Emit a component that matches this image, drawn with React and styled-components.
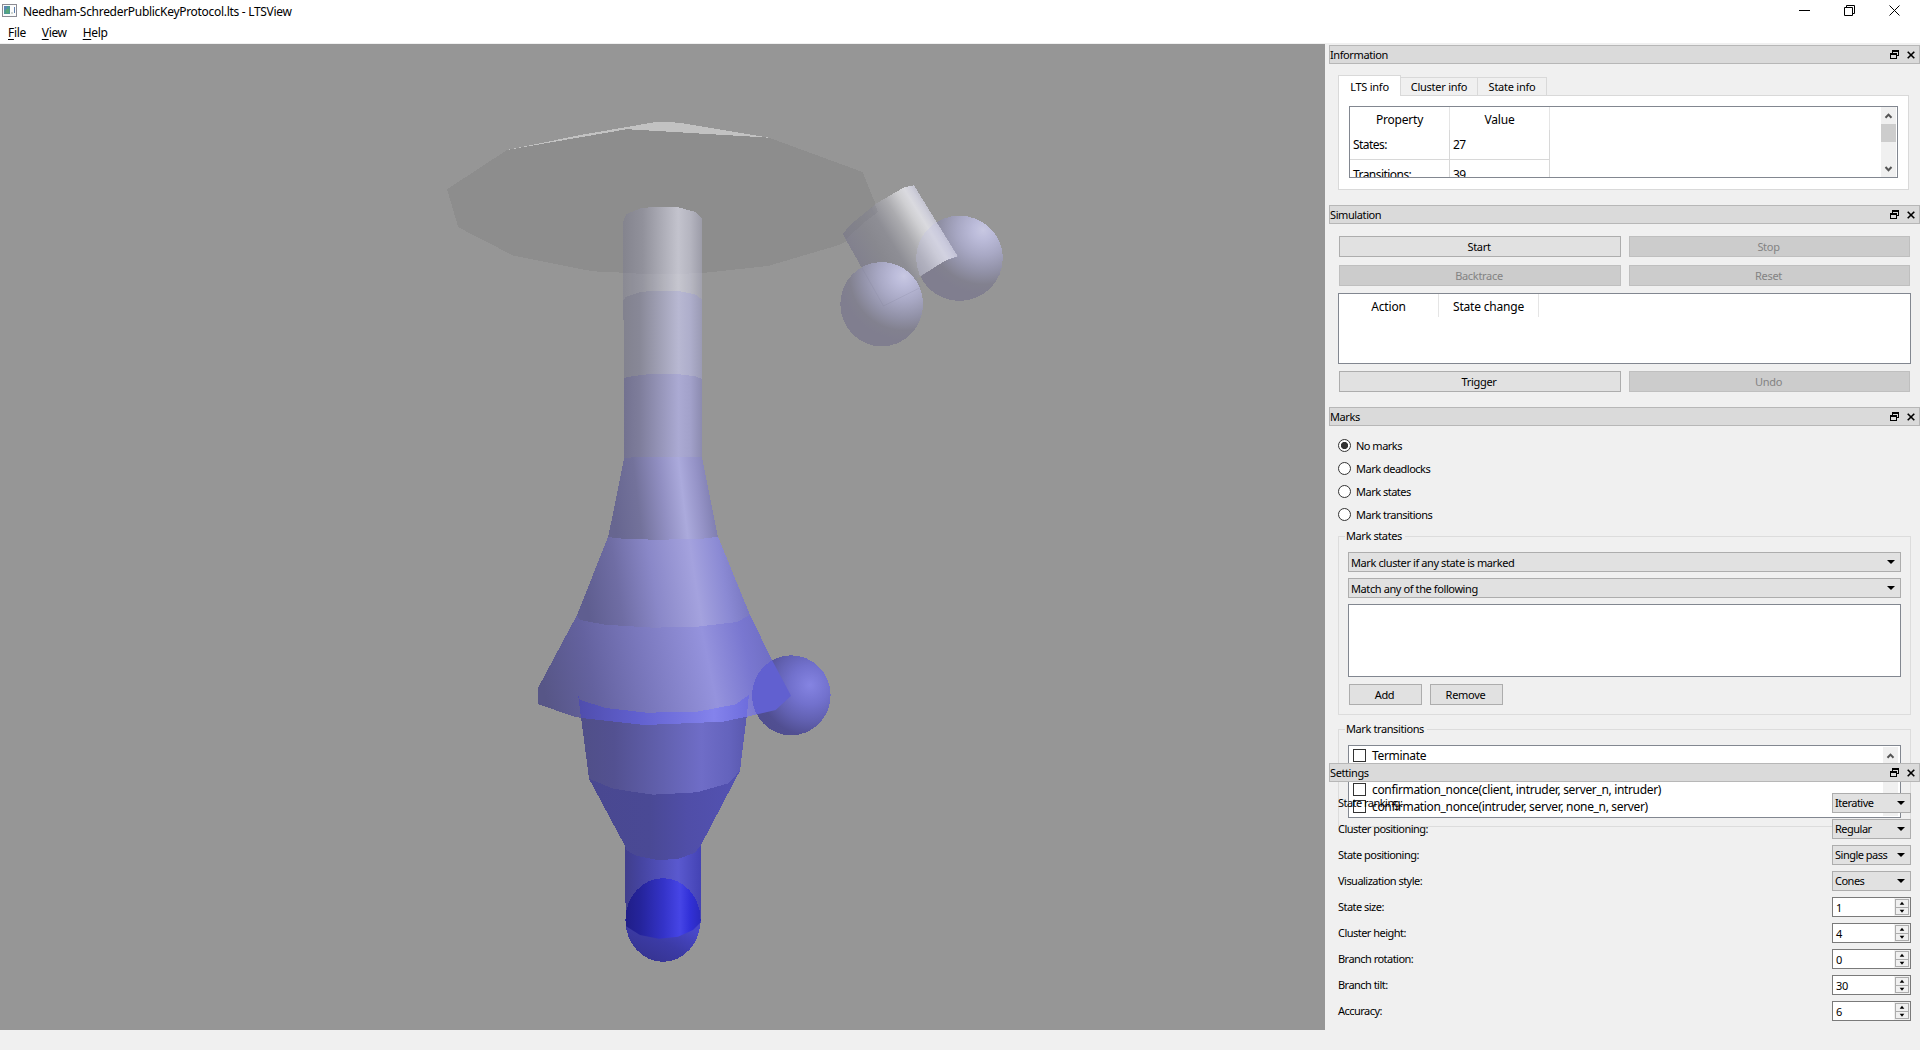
import React from "react";
import styled, { createGlobalStyle, css } from "styled-components";

const Global = createGlobalStyle`
  * { box-sizing: border-box; }
  body { margin: 0; background: #f0f0f0; overflow: hidden; }
`;

const tahoma = css`
  font-family: "Noto Sans", "Open Sans", sans-serif;
  font-size: 11px;
  letter-spacing: -0.4px;
`;
const segoe = css`
  font-family: "Noto Sans", "Open Sans", sans-serif;
  font-size: 12px;
  letter-spacing: -0.2px;
`;

const Window = styled.div`
  width: 1920px;
  height: 1050px;
  display: flex;
  flex-direction: column;
  background: #f0f0f0;
  color: #000;
  white-space: nowrap;
  ${tahoma}
`;
const TitleBar = styled.header`
  height: 22px;
  flex: none;
  display: flex;
  align-items: center;
  padding: 0 20px 0 2px;
  background: #fff;
  ${segoe}
  svg { display: block; }
`;
const Caption = styled.span`
  flex: 1;
  margin-left: 6px;
  padding-top: 1px;
  letter-spacing: -0.3px;
`;
const WindowButtons = styled.div`
  display: flex;
  gap: 34px;
  margin-top: -2px;
`;
const MenuBar = styled.nav`
  height: 21px;
  flex: none;
  display: flex;
  gap: 16px;
  padding: 2px 8px 0;
  background: #fff;
  line-height: 18px;
  ${segoe}
  letter-spacing: -0.35px;
`;
const Accel = styled.span`
  text-decoration: underline;
  text-underline-offset: 2px;
`;
const Body = styled.div`
  height: 987px;
  flex: none;
  display: flex;
`;
const Viewport = styled.main`
  width: 1325px;
  height: 986px;
  margin-top: 1px;
  flex: none;
  background: #969696;
  svg { display: block; }
`;
const DockArea = styled.aside`
  width: 591px;
  margin-left: 4px;
  display: flex;
  flex-direction: column;
  padding-top: 2px;
`;
const Dock = styled.section`
  height: ${(p) => p.$h}px;
  flex: none;
  position: relative;
  z-index: ${(p) => p.$z || 0};
`;
const DockTitle = styled.div`
  height: 19px;
  display: flex;
  align-items: center;
  gap: 8px;
  padding: 0 4px 0 0;
  border: 1px solid #b7b7b7;
  background: #dadada;
  span { flex: 1; }
  svg { display: block; }
`;
const DockBody = styled.div`
  padding: ${(p) => p.$pad};
`;

const TabRow = styled.div`
  display: flex;
  align-items: flex-end;
  height: 21px;
  margin-bottom: -1px;
  position: relative;
`;
const Tab = styled.div`
  width: ${(p) => p.$w}px;
  height: ${(p) => (p.$active ? 21 : 18)}px;
  margin-bottom: ${(p) => (p.$active ? 0 : 1)}px;
  line-height: ${(p) => (p.$active ? 21 : 18)}px;
  text-align: center;
  border: 1px solid #d9d9d9;
  border-bottom: 0;
  border-left-width: ${(p) => (p.$active ? 1 : 0)}px;
  background: ${(p) => (p.$active ? "#fff" : "#f0f0f0")};
  letter-spacing: -0.25px;
`;
const TabPane = styled.div`
  width: 571px;
  height: 95px;
  padding: 10px;
  border: 1px solid #d9d9d9;
  background: #fff;
`;
const Sunken = styled.div`
  width: ${(p) => p.$w}px;
  height: ${(p) => p.$h}px;
  border: 1px solid #828790;
  background: #fff;
  overflow: hidden;
  display: flex;
  justify-content: space-between;
  ${segoe}
`;
const Grid = styled.div`
  display: grid;
  grid-template-columns: 100px 100px;
  grid-template-rows: 23px;
  grid-auto-rows: 30px;
  height: 70px;
`;
const HeadCell = styled.div`
  border-right: 1px solid #e5e5e5;
  text-align: center;
  line-height: 25px;
`;
const Cell = styled.div`
  border-right: 1px solid #d8d8d8;
  border-bottom: 1px solid #d8d8d8;
  padding-left: 3px;
  line-height: 30px;
  letter-spacing: -0.55px;
`;
const ScrollTrack = styled.div`
  width: 15px;
  margin: ${(p) => p.$m || "0 1px 0 0"};
  background: #f0f0f0;
  display: flex;
  flex-direction: column;
  justify-content: space-between;
  svg { display: block; }
`;
const Thumb = styled.div`
  height: 18px;
  margin-bottom: 18px;
  background: #cdcdcd;
`;

const ButtonGrid = styled.div`
  display: grid;
  grid-template-columns: 282px 281px;
  column-gap: 8px;
  row-gap: 8px;
  padding: 0 1px;
  margin-top: ${(p) => p.$mt || 0}px;
  margin-bottom: ${(p) => p.$mb || 0}px;
`;
const Button = styled.button`
  ${tahoma}
  letter-spacing: -0.3px;
  height: 21px;
  width: ${(p) => (p.$w ? `${p.$w}px` : "auto")};
  padding: 0 2px 0 0;
  line-height: 19px;
  border: 1px solid #adadad;
  background: #e1e1e1;
  color: #000;
  &:disabled {
    border-color: #bfbfbf;
    background: #cccccc;
    color: #838383;
  }
`;

const RadioRow = styled.label`
  display: flex;
  align-items: center;
  gap: 5px;
  height: 23px;
  letter-spacing: -0.5px;
`;
const Radio = styled.span`
  width: 13px;
  height: 13px;
  border: 1px solid #333;
  border-radius: 50%;
  background: ${(p) =>
    p.$on ? "radial-gradient(circle, #333 3.2px, #fff 4px)" : "#fff"};
`;
const Group = styled.fieldset`
  width: 573px;
  height: ${(p) => p.$h}px;
  margin: ${(p) => p.$mt || 0}px 0 ${(p) => p.$mb || 0}px;
  padding: ${(p) => p.$pt}px 9px 0;
  border: 1px solid #dcdcdc;
  min-width: 0;
`;
const Legend = styled.legend`
  height: 14px;
  line-height: 14px;
  margin-left: -3px;
  padding: 0 3px 0 1px;
`;
const Combo = styled.div`
  width: ${(p) => p.$w}px;
  height: 20px;
  margin-bottom: ${(p) => p.$mb || 0}px;
  display: flex;
  align-items: center;
  justify-content: space-between;
  padding: 0 5px 0 2px;
  border: 1px solid #adadad;
  background: #e1e1e1;
  line-height: 15px;
  svg { display: block; }
`;
const ButtonRow = styled.div`
  display: flex;
  gap: 8px;
  padding: 7px 0 0 1px;
`;
const CheckList = styled.div`
  padding: 1px 0 0 4px;
`;
const CheckRow = styled.div`
  display: flex;
  align-items: center;
  gap: 6px;
  height: 17px;
  letter-spacing: -0.34px;
`;
const Box = styled.span`
  width: 13px;
  height: 13px;
  border: 1px solid #333;
  background: #fff;
`;
const SettingRow = styled.div`
  display: flex;
  align-items: center;
  justify-content: space-between;
  width: 573px;
  height: 20px;
  margin-bottom: 6px;
`;
const SettingLabel = styled.span`
  padding-bottom: 2px;
  letter-spacing: -0.53px;
`;
const ComboText = styled.span`
  padding-bottom: 1px;
  letter-spacing: -0.5px;
`;
const Spin = styled.div`
  width: 79px;
  height: 20px;
  display: flex;
  align-items: center;
  justify-content: space-between;
  padding: 0 1px 0 3px;
  border: 1px solid #7a7a7a;
  background: #fff;
  span { padding-top: 1px; }
`;
const SpinButtons = styled.div`
  width: 14px;
  height: 16px;
  border: 1px solid #acacac;
  outline: 1px solid #f0f0f0;
  background: #f0f0f0;
  display: flex;
  flex-direction: column;
  svg { display: block; height: 7px; }
  svg + svg { border-top: 1px solid #acacac; height: 8px; }
`;

const AppIcon = () => (
  <svg width="15" height="14" viewBox="0 0 15 14" shapeRendering="crispEdges">
    <rect x="0.5" y="0.5" width="14" height="12" fill="#fbfbfb" stroke="#8b8b93" />
    <rect x="2" y="2" width="6" height="8" fill="#4f9a94" />
    <rect x="2" y="2" width="3" height="4" fill="#5a86b4" />
    <rect x="4" y="5" width="3" height="4" fill="#58a878" />
    <rect x="9" y="8" width="2" height="2" fill="#cfd6d2" />
    <rect x="12" y="3" width="1" height="6" fill="#5f7fae" />
  </svg>
);
const DockIcons = () => (
  <>
    <svg width="9" height="9" viewBox="0 0 9 9" shapeRendering="crispEdges">
      <path d="M2 0h7v6h-2v-1h1v-3h-5v1h-1z M0 3h7v6h-7z M1 5v3h5v-3z" fill="#000" fillRule="evenodd" />
    </svg>
    <svg width="8" height="8" viewBox="0 0 8 8">
      <path d="M0.7 0.7l6.6 6.6M7.3 0.7l-6.6 6.6" stroke="#000" strokeWidth="1.6" />
    </svg>
  </>
);
const Chevron = ({ down }) => (
  <svg width="15" height="17" viewBox="0 0 15 17">
    <path d={down ? "M4.5 7l3 3.2 3-3.2" : "M4.5 10.8l3-3.2 3 3.2"} fill="none" stroke="#555" strokeWidth="2" />
  </svg>
);
const Arrow = () => (
  <svg width="8" height="4" viewBox="0 0 8 4"><path d="M0 0h8l-4 4z" fill="#000" /></svg>
);
const Title = ({ children }) => (
  <DockTitle><span>{children}</span><DockIcons /></DockTitle>
);

const Grad = ({ id, x1, x2, stops, y1 = 0, y2 = 0 }) => (
  <linearGradient id={id} gradientUnits="userSpaceOnUse" x1={x1} x2={x2} y1={y1} y2={y2}>
    {stops.map(([o, c]) => <stop key={o} offset={o} stopColor={c} />)}
  </linearGradient>
);
const Shine = ({ id, cx, cy, r, stops }) => (
  <radialGradient id={id} gradientUnits="userSpaceOnUse" cx={cx} cy={cy} r={r}>
    {stops.map(([o, c]) => <stop key={o} offset={o} stopColor={c} />)}
  </radialGradient>
);

const pale = [[0, "#c8c8e2"], [0.15, "#bcbcda"], [0.4, "#a8a8c4"], [0.65, "#9292a8"], [0.85, "#82818f"], [1, "#807e8f"]];
const CONE = "577,615 580,620 605,624.7 653,627.7 697,626.7 737,622 750,615 772,660 791,695.7 775.7,710 750,716 723,721.7 645,725 575,717 538,704 538,688";
const TUBE = "625,840 701,840 701,922 693,930 678,936.7 659,938.7 640,935 625.7,926";

const Scene = () => (
  <svg width="1325" height="986" viewBox="0 44 1325 986" shapeRendering="crispEdges">
    <defs>
      <Grad id="s1" x1={623} x2={702} stops={[[0, "#84848e"], [0.25, "#91919b"], [0.7, "#c3c3cd"], [0.85, "#b5b5c0"], [1, "#9c9ca8"]]} />
      <Grad id="s2" x1={624} x2={702} stops={[[0, "#82828f"], [0.2, "#888897"], [0.7, "#b8b8d2"], [0.85, "#aeaecb"], [1, "#9a9ab4"]]} />
      <Grad id="s3" x1={624} x2={702} stops={[[0, "#737290"], [0.2, "#7e7d9b"], [0.7, "#abaad3"], [0.85, "#a2a1ca"], [1, "#8c8bb0"]]} />
      <Grad id="s4" x1={613} y1={505} x2={713} y2={493} stops={[[0, "#676690"], [0.25, "#73729b"], [0.5, "#918fc2"], [0.7, "#abaadc"], [0.85, "#9694c8"], [1, "#7f7eb0"]]} />
      <Grad id="s5" x1={585} y1={590} x2={748} y2={565} stops={[[0, "#5f5e90"], [0.2, "#6f6da4"], [0.42, "#8a88c8"], [0.67, "#a4a2de"], [0.84, "#8b8ad4"], [1, "#7473bd"]]} />
      <Grad id="s6" x1={545} y1={695} x2={785} y2={645} stops={[[0, "#575687"], [0.2, "#64629f"], [0.42, "#7a78bd"], [0.68, "#9593dd"], [0.84, "#7977d0"], [1, "#6a69bd"]]} />
      <Grad id="band" x1={578} x2={748} stops={[[0, "#4f4dac"], [0.35, "#6160cf"], [0.8, "#8483ec"], [1, "#6e6ddd"]]} />
      <Grad id="s7" x1={581} x2={746} stops={[[0, "#504f88"], [0.2, "#535191"], [0.5, "#6261af"], [0.73, "#6f6dc7"], [0.9, "#6463bd"], [1, "#5a59af"]]} />
      <Grad id="s8" x1={590} x2={740} stops={[[0, "#494890"], [0.4, "#4a4995"], [0.65, "#504ea8"], [1, "#5352b2"]]} />
      <Grad id="s9" x1={625} x2={701} stops={[[0, "#403e8c"], [0.2, "#4544a0"], [0.7, "#5a59cf"], [1, "#4443b4"]]} />
      <Grad id="core" x1={626} x2={701} stops={[[0, "#201e88"], [0.2, "#25249c"], [0.5, "#3433c8"], [0.72, "#4645e6"], [0.85, "#3231d8"], [1, "#2a29bc"]]} />
      <Grad id="coreLow" x1={650} y1={961} x2={672} y2={920} stops={[[0, "#363492"], [0.5, "#3c3ba6"], [1, "#4847c8"]]} />
      <Grad id="cyl" x1={843} y1={234} x2={918} y2={188} stops={[[0, "#82818e"], [0.25, "#88888f"], [0.42, "#8e8e95"], [0.62, "#ababaf"], [0.78, "#cfcfd2"], [0.86, "#dadadf"], [0.93, "#cfcfda"], [1, "#bdbdca"]]} />
      <Shine id="ballR" cx={983} cy={230} r={64} stops={pale} />
      <Shine id="ballL" cx={904} cy={276} r={64} stops={pale} />
      <Shine id="ballM" cx={810} cy={685} r={56} stops={[[0, "#8584e2"], [0.35, "#7271cd"], [0.65, "#6160b0"], [0.9, "#514f92"], [1, "#504e90"]]} />
      <clipPath id="coneClip"><polygon points={CONE} /></clipPath>
      <clipPath id="tubeClip"><polygon points={TUBE} /></clipPath>
      <clipPath id="cylClip"><polygon points="914,185.7 958,256.3 945,260.7 917,278.3 870,200" /></clipPath>
    </defs>

    <polygon fill="#8d8d8d" points="507,150 627,129 769,137.7 862.5,172 880,215 877,225 839,245 768,266 705.5,272.7 663,274.5 592.6,271.3 513.4,255.7 458.3,227.3 447,189.3" />
    <polygon fill="#c2c2c2" points="507,150 583,134.5 630,126.5 654,122.3 670,122 683,123.3 769.5,137.7 627,129.2" />

    <polygon fill="url(#s1)" points="623,222 626,214.3 640.5,208.3 652,207 677,207 696,212 702,218.3 702,300 623,302" />
    <polygon fill="#fff" fillOpacity="0.05" points="623,273 663,274.5 702,273 702,300 623,302" />
    <polygon fill="url(#s2)" points="623,301 626,296.7 640.5,292 652,291 678,291 695,294.3 702,299.3 702,380 624,380 624,320 623,320" />
    <polygon fill="url(#s3)" points="624,378 627,377 650,374 677,374 695,376.3 702,379 702,459 624,459" />
    <polygon fill="url(#s4)" points="624,458.3 633,457.3 702,457.3 718,537 700,539 657,540 625,539 608,538" />
    <polygon fill="url(#s5)" points="608,537 625,539 657,539.7 700,539 718,536.7 750,615 737,622 697,626.7 653,627.7 605,624.7 580,620 577,615" />
    <polygon fill="url(#s6)" points={CONE} />

    <polygon fill="url(#s7)" points="581,717 645,724 723,720 746.7,716 740,770.7 728.3,783.3 697,792.3 653,794.7 630,791.3 612,788.3 589,778.7" />
    <polygon fill="url(#band)" points="578,694 580,700 606,708 646.7,712.7 697,711.7 736,704.3 749,694.7 746.7,716.7 723,721.7 653,724.7 645,725 581,718" />
    <polygon fill="url(#s9)" points={TUBE} />
    <polygon fill="url(#s8)" points="589,778.7 612,788.3 630,791.3 653,794.7 697,792.3 728.3,783.3 740,770.7 701,845 695,852.7 678,859 658,860 637,856 627,850.7 625,846" />
    <ellipse cx="663" cy="920" rx="37.6" ry="41.8" fill="url(#coreLow)" />
    <ellipse cx="663" cy="920" rx="37.6" ry="41.8" fill="url(#core)" clipPath="url(#tubeClip)" />

    <ellipse cx="791.3" cy="695.3" rx="39.3" ry="40" fill="url(#ballM)" />
    <ellipse cx="791.3" cy="695.3" rx="39.3" ry="40" fill="#6160d0" clipPath="url(#coneClip)" />

    <ellipse cx="959.5" cy="258.3" rx="43.3" ry="42.6" fill="url(#ballR)" />
    <polygon fill="url(#cyl)" points="842.7,234 850,225 876.7,203.3 898.3,190.7 905,187 914,185.3 957.7,256.3 945,260.7 917.3,278.3 920.7,286.7 883.3,306" />
    <ellipse cx="959.5" cy="258.3" rx="43.3" ry="42.6" fill="#c0bfe6" fillOpacity="0.3" clipPath="url(#cylClip)" />
    <polygon fill="#77777f" fillOpacity="0.22" points="842.7,234 850,225 875,204.5 878,212 866,221 846,239" />
    <ellipse cx="881.7" cy="304.2" rx="41.4" ry="42.2" fill="url(#ballL)" />
    <path d="M862 268l21.500 38 36-18" fill="none" stroke="#77768c" strokeOpacity="0.16" shapeRendering="auto" />
  </svg>
);

const combos = [["State ranking:", "Iterative"], ["Cluster positioning:", "Regular"], ["State positioning:", "Single pass"], ["Visualization style:", "Cones"]];
const spins = [["State size:", "1"], ["Cluster height:", "4"], ["Branch rotation:", "0"], ["Branch tilt:", "30"], ["Accuracy:", "6"]];

export default function App() {
  return (
    <Window>
      <Global />
      <TitleBar>
        <AppIcon />
        <Caption>Needham-SchrederPublicKeyProtocol.lts - LTSView</Caption>
        <WindowButtons>
          <svg width="11" height="11" viewBox="0 0 11 11"><path d="M0 5.5h11" stroke="#000" /></svg>
          <svg width="11" height="11" viewBox="0 0 11 11"><path d="M0.5 2.5h8v8h-8z M2.5 2.5v-2h8v8h-2" fill="none" stroke="#000" /></svg>
          <svg width="11" height="11" viewBox="0 0 11 11"><path d="M0.5 0.5l10 10M10.5 0.5l-10 10" stroke="#000" /></svg>
        </WindowButtons>
      </TitleBar>
      <MenuBar>
        <span><Accel>F</Accel>ile</span>
        <span><Accel>V</Accel>iew</span>
        <span><Accel>H</Accel>elp</span>
      </MenuBar>
      <Body>
        <Viewport><Scene /></Viewport>
        <DockArea>
          <Dock $h={160}>
            <Title>Information</Title>
            <DockBody $pad="11px 9px 0">
              <TabRow>
                <Tab $active $w={63}>LTS info</Tab>
                <Tab $w={77}>Cluster info</Tab>
                <Tab $w={69}>State info</Tab>
              </TabRow>
              <TabPane>
                <Sunken $w={549} $h={72}>
                  <Grid>
                    <HeadCell>Property</HeadCell>
                    <HeadCell>Value</HeadCell>
                    <Cell>States:</Cell>
                    <Cell>27</Cell>
                    <Cell>Transitions:</Cell>
                    <Cell>39</Cell>
                  </Grid>
                  <ScrollTrack><Chevron /><Thumb /><Chevron down /></ScrollTrack>
                </Sunken>
              </TabPane>
            </DockBody>
          </Dock>

          <Dock $h={202}>
            <Title>Simulation</Title>
            <DockBody $pad="12px 9px 0">
              <ButtonGrid $mb={7}>
                <Button>Start</Button>
                <Button disabled>Stop</Button>
                <Button disabled>Backtrace</Button>
                <Button disabled>Reset</Button>
              </ButtonGrid>
              <Sunken $w={573} $h={71}>
                <Grid>
                  <HeadCell>Action</HeadCell>
                  <HeadCell>State change</HeadCell>
                </Grid>
              </Sunken>
              <ButtonGrid $mt={7}>
                <Button>Trigger</Button>
                <Button disabled>Undo</Button>
              </ButtonGrid>
            </DockBody>
          </Dock>

          <Dock $h={356}>
            <Title>Marks</Title>
            <DockBody $pad="8px 9px 0">
              <RadioRow><Radio $on />No marks</RadioRow>
              <RadioRow><Radio />Mark deadlocks</RadioRow>
              <RadioRow><Radio />Mark states</RadioRow>
              <RadioRow><Radio />Mark transitions</RadioRow>
              <Group $h={186} $mt={3} $mb={7} $pt={9}>
                <Legend>Mark states</Legend>
                <Combo $w={553} $mb={6}>Mark cluster if any state is marked<Arrow /></Combo>
                <Combo $w={553} $mb={6}>Match any of the following<Arrow /></Combo>
                <Sunken $w={553} $h={73} />
                <ButtonRow>
                  <Button $w={73}>Add</Button>
                  <Button $w={73}>Remove</Button>
                </ButtonRow>
              </Group>
              <Group $h={105} $pt={9}>
                <Legend>Mark transitions</Legend>
                <Sunken $w={553} $h={73}>
                  <CheckList>
                    <CheckRow><Box />Terminate</CheckRow>
                    <CheckRow><Box /></CheckRow>
                    <CheckRow><Box />confirmation_nonce(client, intruder, server_n, intruder)</CheckRow>
                    <CheckRow><Box />confirmation_nonce(intruder, server, none_n, server)</CheckRow>
                  </CheckList>
                  <ScrollTrack $m="1px 2px 1px 0"><Chevron /></ScrollTrack>
                </Sunken>
              </Group>
            </DockBody>
          </Dock>

          <Dock $h={266} $z={1}>
            <Title>Settings</Title>
            <DockBody $pad="11px 9px 0">
              {combos.map(([label, value]) => (
                <SettingRow key={label}>
                  <SettingLabel>{label}</SettingLabel>
                  <Combo $w={79}><ComboText>{value}</ComboText><Arrow /></Combo>
                </SettingRow>
              ))}
              {spins.map(([label, value]) => (
                <SettingRow key={label}>
                  <SettingLabel>{label}</SettingLabel>
                  <Spin>
                    <span>{value}</span>
                    <SpinButtons>
                      <svg width="12" viewBox="0 0 12 7"><path d="M3.500 5h5l-2.500-3z" fill="#000" /></svg>
                      <svg width="12" viewBox="0 0 12 7"><path d="M3.500 2h5l-2.500 3z" fill="#000" /></svg>
                    </SpinButtons>
                  </Spin>
                </SettingRow>
              ))}
            </DockBody>
          </Dock>
        </DockArea>
      </Body>
    </Window>
  );
}
